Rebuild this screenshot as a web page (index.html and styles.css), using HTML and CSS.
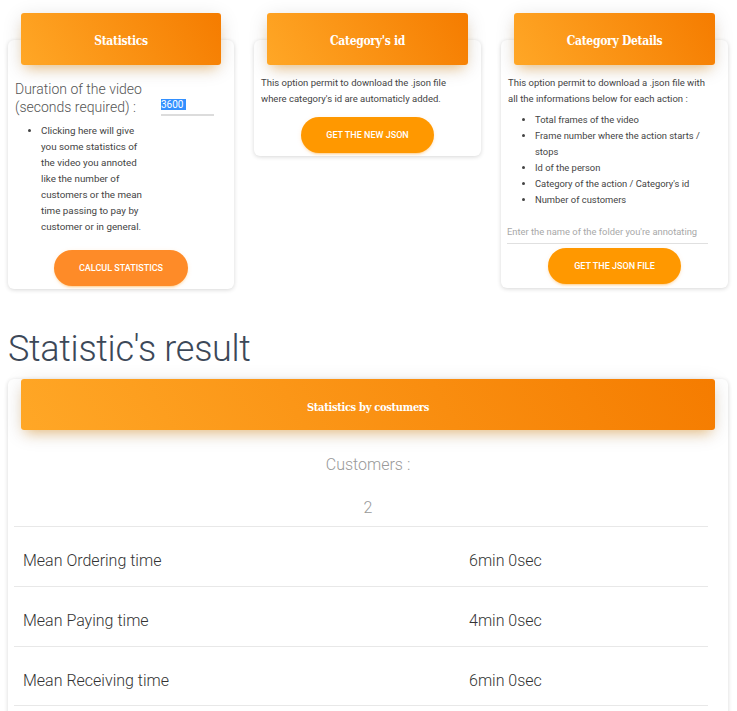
FILE: index.html
```html
<!DOCTYPE html>
<html>
<head>
<meta charset="utf-8">
<link rel="stylesheet" href="styles.css">
</head>
<body>
<div class="page">
  <div class="cards">
    <div class="card card-stats">
      <div class="card-header"><h4 class="card-title">Statistics</h4></div>
      <div class="card-body">
        <div class="stats-row">
          <div class="stats-left">
            <p class="duration-label">Duration of the video (seconds required) :</p>
            <ul class="small-list list-stats">
              <li>Clicking here will give you some statistics of the video you annoted like the number of customers or the mean time passing to pay by customer or in general.</li>
            </ul>
          </div>
          <div class="stats-right">
            <div class="fake-input"><span class="selected">3600</span></div>
          </div>
        </div>
        <div class="btn-wrap"><button class="btn btn-calc">Calcul statistics</button></div>
      </div>
    </div>

    <div class="card card-id">
      <div class="card-header"><h4 class="card-title">Category's id</h4></div>
      <div class="card-body">
        <p class="small-text">This option permit to download the .json file where category's id are automaticly added.</p>
        <div class="btn-wrap btn-wrap-id"><button class="btn">Get the new json</button></div>
      </div>
    </div>

    <div class="card card-details">
      <div class="card-header"><h4 class="card-title">Category Details</h4></div>
      <div class="card-body">
        <p class="small-text">This option permit to download a .json file with all the informations below for each action :</p>
        <ul class="small-list list-details">
          <li>Total frames of the video</li>
          <li>Frame number where the action starts / stops</li>
          <li>Id of the person</li>
          <li>Category of the action / Category's id</li>
          <li>Number of customers</li>
        </ul>
        <div class="folder-input">Enter the name of the folder you're annotating</div>
        <div class="btn-wrap btn-wrap-details"><button class="btn">Get the json file</button></div>
      </div>
    </div>
  </div>

  <h2 class="result-title">Statistic's result</h2>

  <div class="card card-result">
    <div class="card-header card-header-result"><h4 class="card-title result-card-title">Statistics by costumers</h4></div>
    <div class="result-body">
      <div class="customers-label">Customers :</div>
      <div class="customers-value">2</div>
      <div class="result-table">
        <div class="result-row"><div class="cell">Mean Ordering time</div><div class="cell">6min 0sec</div></div>
        <div class="result-row"><div class="cell">Mean Paying time</div><div class="cell">4min 0sec</div></div>
        <div class="result-row"><div class="cell">Mean Receiving time</div><div class="cell">6min 0sec</div></div>
      </div>
    </div>
  </div>
</div>
</body>
</html>
```

FILE: styles.css
```css
* { box-sizing: border-box; }

html, body {
  margin: 0;
  padding: 0;
  background: #ffffff;
  font-family: Roboto, "Noto Sans", sans-serif;
  color: #3c4858;
  overflow: hidden;
}

.page {
  padding: 0 9px 0 8px;
}

.cards {
  display: grid;
  grid-template-columns: 226px 227px 227px;
  column-gap: 20px;
  align-items: start;
  padding-top: 40px;
}

.card {
  background: #fff;
  border-radius: 6px;
  box-shadow: 0 1px 4px 0 rgba(0, 0, 0, 0.16);
}

.card-header {
  margin: -27px 13px 0;
  height: 52px;
  border-radius: 3px;
  background: linear-gradient(60deg, #ffa726, #f57c00);
  box-shadow: 0 4px 20px 0 rgba(0, 0, 0, 0.12), 0 7px 12px -5px rgba(255, 152, 0, 0.45);
  display: flex;
  align-items: center;
  justify-content: center;
}

.card-title {
  margin: 0;
  padding-top: 3px;
  color: #fff;
  font-family: "DejaVu Serif Condensed", "DejaVu Serif", serif;
  font-weight: bold;
  font-size: 12px;
  letter-spacing: -0.3px;
}

.card-body {
  padding: 0 20px 0 7px;
}

.stats-row {
  display: flex;
  padding-top: 15px;
}

.stats-left {
  width: 133px;
}

.stats-right {
  flex: 1;
  padding-left: 13px;
  padding-top: 16px;
}

.duration-label {
  margin: 0;
  font-size: 14px;
  line-height: 18px;
  font-weight: 300;
  color: #555;
}

.fake-input {
  height: 20px;
  border-bottom: 2px solid #dcdcdc;
  font-size: 10px;
  line-height: 16px;
  padding-top: 1px;
}

.selected {
  background: #3390ff;
  color: #fff;
  padding-right: 3px;
}

.small-list {
  margin: 0;
  padding-left: 26px;
  font-size: 9.4px;
  line-height: 16px;
  color: #444;
  font-weight: 400;
}

.list-stats {
  margin-top: 7px;
  padding-right: 4px;
  font-size: 9.8px;
}

.small-text {
  margin: 0;
  padding-top: 10px;
  font-size: 9.5px;
  line-height: 16px;
  color: #444;
}

.btn-wrap {
  display: flex;
  justify-content: center;
  padding-left: 13px;
}

.card-stats .btn-wrap {
  padding-top: 15px;
  padding-bottom: 3px;
}

.btn-wrap-id {
  padding-top: 10px;
  padding-bottom: 3px;
}

.btn {
  border: none;
  border-radius: 30px;
  height: 36px;
  width: 133px;
  background: #ff9800;
  color: #fff;
  font-family: Roboto, sans-serif;
  font-weight: 500;
  font-size: 9px;
  text-transform: uppercase;
  box-shadow: 0 2px 2px 0 rgba(255, 152, 0, 0.14), 0 3px 1px -2px rgba(255, 152, 0, 0.2), 0 1px 5px 0 rgba(255, 152, 0, 0.12);
  padding: 0;
}

.btn-calc {
  width: 134px;
  background: #fe8b28;
}

.list-details {
  margin-top: 5px;
  padding-left: 27px;
}

.folder-input {
  margin-top: 15px;
  font-size: 9.4px;
  line-height: 18px;
  color: #a8a8a8;
  border-bottom: 1px solid #e0e0e0;
  padding-bottom: 2px;
  margin-left: -1px;
  white-space: nowrap;
}

.btn-wrap-details {
  padding-top: 4px;
  padding-bottom: 4px;
}

.result-title {
  margin: 38px 0 0;
  font-size: 36px;
  font-weight: 300;
  line-height: 44px;
  color: #3c4858;
  letter-spacing: -0.3px;
}

.card-result {
  margin-top: 35px;
}

.card-header-result {
  margin-top: -27px;
  height: 51px;
}

.result-card-title {
  font-size: 11px;
  padding-top: 6px;
}

.result-body {
  padding: 0 20px 40px 6px;
}

.customers-label {
  text-align: center;
  font-size: 16px;
  font-weight: 300;
  color: #999;
  line-height: 20px;
  margin-top: 25px;
  padding-left: 14px;
}

.customers-value {
  text-align: center;
  font-size: 16px;
  font-weight: 300;
  color: #999;
  line-height: 20px;
  margin-top: 23px;
  padding-left: 14px;
  padding-bottom: 8px;
}

.result-row {
  display: grid;
  grid-template-columns: 447px 1fr;
  border-top: 1px solid #e8e8e8;
  height: 60px;
  align-items: center;
}

.result-row:last-child {
  border-bottom: 1px solid #e8e8e8;
}

.cell {
  font-size: 16px;
  font-weight: 300;
  color: #333;
  padding: 8px 9px 0;
}

.cell + .cell {
  padding-left: 8px;
}
```
